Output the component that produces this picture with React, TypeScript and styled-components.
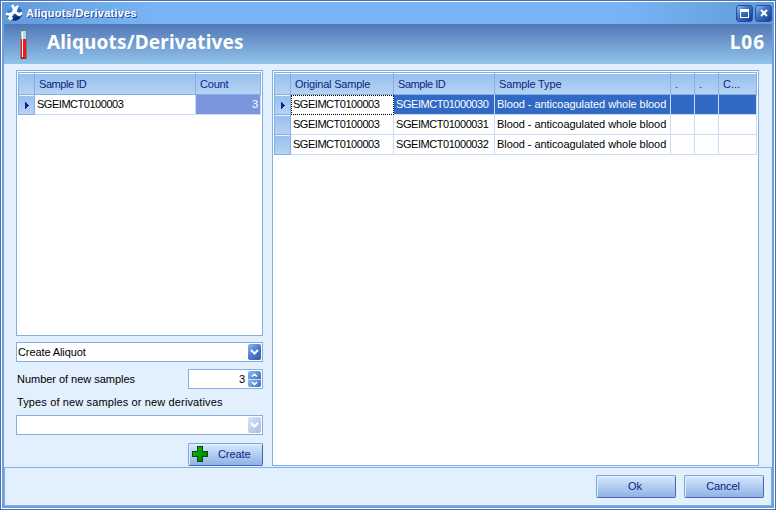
import React from "react";
import styled, { createGlobalStyle } from "styled-components";

const Global = createGlobalStyle`
  * { box-sizing: border-box; }
  body { margin: 0; background: #4a6cb4; }
`;

const LINE = "#84aee6";
const NAVY = "#0c2485";

const Window = styled.div`
  width: 776px;
  height: 510px;
  display: flex;
  flex-direction: column;
  border: 1px solid #4a6cb4;
  outline: 1px solid #fff;
  outline-offset: -2px;
  padding: 1px;
  font: 11px/14px "Liberation Sans", Arial, sans-serif;
  color: #000;
  white-space: nowrap;
  cursor: default;
`;

const TitleBar = styled.div`
  height: 22px;
  flex: none;
  display: flex;
  align-items: center;
  padding: 0 2px 0 3px;
  background: linear-gradient(90deg, #629ad8 0, #78b4f4 150px, #78b4f4 620px, #629ad8 100%);
`;

const Caption = styled.div`
  flex: 1;
  margin-left: 3px;
  font-weight: bold;
  font-size: 11px;
  letter-spacing: 0.26px;
  color: #fff;
  text-shadow: 1px 1px 0 #24479c;
`;

const TitleButton = styled.div`
  width: 17px;
  height: 17px;
  margin-left: 2px;
  border-radius: 3px;
  border: 1px solid #2450a4;
  background: linear-gradient(135deg, #8cbcf0 0%, #3f74c4 40%, #16388c 100%);
  display: grid;
  place-items: center;
`;

const Body = styled.div`
  flex: 1;
  min-height: 0;
  display: flex;
  flex-direction: column;
  border: solid #6a9fdc;
  border-width: 0 2px 2px;
  background: #e2effd;
`;

const Banner = styled.div`
  height: 40px;
  flex: none;
  display: flex;
  align-items: flex-start;
  padding: 5px 8px 0 16px;
  background: linear-gradient(#5076b6, #92c4ea);
  color: #fff;
  font: bold 19px/26px "Noto Sans", sans-serif;
`;

const BannerTitle = styled.div`
  flex: 1;
  margin-left: 20px;
  letter-spacing: 0.15px;
`;

const BannerCode = styled.div`
  letter-spacing: 1px;
  margin-right: -1px;
`;

const Content = styled.div`
  flex: 1;
  min-height: 0;
  display: flex;
  gap: 9px;
  padding: 6px 13px 1px 12px;
`;

const Side = styled.div`
  width: 247px;
  flex: none;
  display: flex;
  flex-direction: column;
`;

const Panel = styled.div`
  flex: 1;
  border: 1px solid ${LINE};
  padding: 1px;
  background: #fff;
`;

const SourcePanel = styled(Panel)`
  flex: none;
  height: 266px;
  margin-bottom: 6px;
`;

const Row = styled.div<{ $cols: string }>`
  display: grid;
  grid-template-columns: ${(p) => p.$cols};
  border-left: 1px solid ${LINE};
`;

const HeadRow = styled(Row)`
  height: 23px;
  border-top: 1px solid ${LINE};
`;

const DataRow = styled(Row)`
  height: 20px;
`;

const HeadCell = styled.div`
  border-right: 1px solid ${LINE};
  border-bottom: 1px solid ${LINE};
  background: linear-gradient(#fff 0 1px, #98c0ec 1px, #b5d3f4 100%);
  color: ${NAVY};
  padding: 4px 0 0 4px;
  overflow: hidden;
`;

const Indicator = styled.div`
  border-right: 1px solid ${LINE};
  border-bottom: 1px solid ${LINE};
  background: linear-gradient(#e8f3ff 0 1px, #98c0ec 1px, #b5d3f4 100%);
  padding: 7px 0 0 6px;
  line-height: 0;
`;

const cellColors = {
  plain: "background:#fff;color:#000;",
  selected: "background:#316ac5;color:#fff;",
  count: "background:#7c96de;color:#fff;text-align:right;",
};

const Cell = styled.div<{ $kind?: keyof typeof cellColors; $focus?: boolean }>`
  ${(p) => cellColors[p.$kind ?? "plain"]}
  border-right: 1px solid #c8dcf8;
  border-bottom: 1px solid #c8dcf8;
  padding: 2px 2px 0;
  ${(p) => p.$focus && "outline: 1px dotted #000; outline-offset: -1px; border-color: #fff;"}
`;

const Text = styled.span<{ $ls?: number }>`
  letter-spacing: ${(p) => p.$ls ?? 0}px;
`;

const Field = styled.div<{ $w?: number }>`
  width: ${(p) => (p.$w ? `${p.$w}px` : "100%")};
  height: 20px;
  flex: none;
  display: flex;
  align-items: center;
  justify-content: space-between;
  padding: 1px 1px 1px 2px;
  border: 1px solid ${LINE};
  background: #fff;
`;

const Value = styled.span<{ $right?: boolean }>`
  flex: 1;
  margin-left: -1px;
  ${(p) => p.$right && "text-align: right; padding-right: 3px;"}
`;

const DropButton = styled.div<{ $off?: boolean }>`
  width: 13px;
  height: 16px;
  border-radius: 2px;
  display: grid;
  place-items: center;
  background: ${(p) =>
    p.$off
      ? "linear-gradient(135deg, #d2e6fa, #a9bde2)"
      : "linear-gradient(135deg, #8cbcf0, #4c7cca 50%, #3458a8)"};
`;

const Spin = styled.div`
  width: 13px;
  height: 16px;
  display: grid;
  grid-template-rows: 8px 8px;
  border-radius: 2px;
  overflow: hidden;
`;

const SpinHalf = styled.div`
  display: grid;
  place-items: center;
  background: linear-gradient(135deg, #8cbcf0, #3f6cbc);
  & + & { border-top: 1px solid #c8dcf8; }
`;

const FieldLine = styled.div`
  display: flex;
  align-items: center;
  justify-content: space-between;
  margin-top: 7px;
  padding-left: 1px;
`;

const Label = styled.div`
  margin: 6px 0 6px 1px;
  height: 14px;
`;

const Button = styled.div<{ $w: number }>`
  width: ${(p) => p.$w}px;
  height: 23px;
  flex: none;
  display: flex;
  align-items: center;
  justify-content: center;
  padding: 0 2px 1px 0;
  border: 1px solid;
  border-color: #7ca4e0 #4866b4 #4866b4 #7ca4e0;
  border-radius: 2px;
  background: linear-gradient(#d8eafc, #b4d0f2 45%, #90b2e4);
  box-shadow: inset 1px 1px 0 #e4f1fe;
  color: ${NAVY};
`;

const CreateButton = styled(Button)`
  align-self: flex-end;
  margin-top: 8px;
  justify-content: flex-start;
  padding-left: 3px;
  gap: 10px;
`;

const Footer = styled.div`
  height: 39px;
  flex: none;
  display: flex;
  justify-content: flex-end;
  gap: 8px;
  padding: 7px 7px 0;
  border: 1px solid ${LINE};
`;

const Logo = () => (
  <svg width="18" height="18" viewBox="0 0 18 18">
    <defs>
      <linearGradient id="logo" x1="0" y1="0" x2="0.4" y2="1">
        <stop offset="0.2" stopColor="#4fa6ec" />
        <stop offset="0.9" stopColor="#0a3390" />
      </linearGradient>
    </defs>
    <circle cx="9.2" cy="8.8" r="8" fill="url(#logo)" />
    <path
      d="M5.8 1.2 8.6.6 9.6 3 12 1.2 14 2 12.4 5 11.6 7.6 14.4 8.8 17 7.6 17.4 10 14.6 12.4 11.6 11 9.6 9.2 7 12.4 8.2 14.8 5.4 16.4 2.6 14.6 4.2 11.8.8 11 1 8.4 4.4 9 7.4 7.4 7.6 4.6Z"
      fill="#fff"
    />
    <path d="M9 13q3 1.4 6-.4q-1.4 3.2-4.8 4z" fill="#062064" />
  </svg>
);

const Tube = () => (
  <svg width="7" height="31" viewBox="0 0 7 31" shapeRendering="crispEdges">
    <path d="M0 1h7v29H0z" fill="#7b7f8a" />
    <path d="M0 0h7v2H0z" fill="#4f8b8c" />
    <path d="M1 2h5v8H1z" fill="#a4dcf6" />
    <path d="M1 10h5v19H1z" fill="#f01c14" />
    <path d="M2 3h1v25H2z" fill="#fff" />
    <path d="M1 29h5v1H1z" fill="#7c3030" />
  </svg>
);

const Marker = () => (
  <svg width="5" height="7" viewBox="0 0 5 7" shapeRendering="crispEdges">
    <path d="M0 0h1v1h1v1h1v1h1v1H3v1H2v1H1v1H0z" fill={NAVY} />
  </svg>
);

const Chevron = ({ w = 9, up = false }: { w?: number; up?: boolean }) => (
  <svg width={w} height={(w + 3) / 2} viewBox={`0 0 ${w} ${(w + 3) / 2}`}>
    <path
      d={up ? `M1 ${w / 2}L${w / 2} 1.4L${w - 1} ${w / 2}` : `M1 1L${w / 2} ${w / 2}L${w - 1} 1`}
      fill="none"
      stroke="#fff"
      strokeWidth={w > 7 ? 2 : 1.6}
    />
  </svg>
);

const Plus = () => (
  <svg width="16" height="16" viewBox="0 0 16 16" shapeRendering="crispEdges">
    <defs>
      <linearGradient id="plus" x1="0" y1="0" x2="1" y2="1">
        <stop offset="0.2" stopColor="#00b400" />
        <stop offset="1" stopColor="#007600" />
      </linearGradient>
    </defs>
    <path d="M5 0h6v5h5v6h-5v5H5v-5H0V5h5z" fill="#144414" />
    <path d="M6 1h4v5h5v4h-5v5H6v-5H1V6h5z" fill="url(#plus)" />
  </svg>
);

const LEFT = "16px 161px 65px";
const RIGHT = "16px 103px 101px 176px 24px 24px 38px";
const RIGHT_HEADS: [string, number][] = [
  ["Original Sample", -0.2],
  ["Sample ID", -0.45],
  ["Sample Type", -0.15],
  [".", 0],
  [".", 0],
  ["C...", 0],
];
const SAMPLES = ["SGEIMCT01000030", "SGEIMCT01000031", "SGEIMCT01000032"];

export default function App() {
  return (
    <>
      <Global />
      <Window>
        <TitleBar>
          <Logo />
          <Caption>Aliquots/Derivatives</Caption>
          <TitleButton>
            <svg width="9" height="9" viewBox="0 0 9 9" shapeRendering="crispEdges">
              <path d="M0 0h9v9H0zM1 3v5h7V3z" fill="#fff" fillRule="evenodd" />
            </svg>
          </TitleButton>
          <TitleButton>
            <svg width="8" height="8" viewBox="0 0 8 8">
              <path d="M1 1l6 6M7 1l-6 6" stroke="#fff" strokeWidth="2" />
            </svg>
          </TitleButton>
        </TitleBar>
        <Body>
          <Banner>
            <Tube />
            <BannerTitle>Aliquots/Derivatives</BannerTitle>
            <BannerCode>L06</BannerCode>
          </Banner>
          <Content>
            <Side>
              <SourcePanel>
                <HeadRow $cols={LEFT}>
                  <HeadCell />
                  <HeadCell><Text $ls={-0.45}>Sample ID</Text></HeadCell>
                  <HeadCell><Text $ls={-0.2}>Count</Text></HeadCell>
                </HeadRow>
                <DataRow $cols={LEFT}>
                  <Indicator><Marker /></Indicator>
                  <Cell><Text $ls={-0.47}>SGEIMCT0100003</Text></Cell>
                  <Cell $kind="count">3</Cell>
                </DataRow>
              </SourcePanel>
              <Field>
                <Value><Text $ls={-0.1}>Create Aliquot</Text></Value>
                <DropButton><Chevron /></DropButton>
              </Field>
              <FieldLine>
                <Text $ls={-0.03}>Number of new samples</Text>
                <Field $w={75}>
                  <Value $right>3</Value>
                  <Spin>
                    <SpinHalf><Chevron w={7} up /></SpinHalf>
                    <SpinHalf><Chevron w={7} /></SpinHalf>
                  </Spin>
                </Field>
              </FieldLine>
              <Label><Text $ls={0.13}>Types of new samples or new derivatives</Text></Label>
              <Field>
                <Value />
                <DropButton $off><Chevron /></DropButton>
              </Field>
              <CreateButton $w={75}><Plus /><Text $ls={-0.1}>Create</Text></CreateButton>
            </Side>
            <Panel>
              <HeadRow $cols={RIGHT}>
                <HeadCell />
                {RIGHT_HEADS.map(([t, ls], i) => (
                  <HeadCell key={i}><Text $ls={ls}>{t}</Text></HeadCell>
                ))}
              </HeadRow>
              {SAMPLES.map((id, i) => {
                const kind = i === 0 ? "selected" : "plain";
                return (
                  <DataRow $cols={RIGHT} key={id}>
                    <Indicator>{i === 0 && <Marker />}</Indicator>
                    <Cell $focus={i === 0}><Text $ls={-0.47}>SGEIMCT0100003</Text></Cell>
                    <Cell $kind={kind}><Text $ls={-0.45}>{id}</Text></Cell>
                    <Cell $kind={kind}><Text $ls={-0.06}>Blood - anticoagulated whole blood</Text></Cell>
                    <Cell $kind={kind} />
                    <Cell $kind={kind} />
                    <Cell $kind={kind} />
                  </DataRow>
                );
              })}
            </Panel>
          </Content>
          <Footer>
            <Button $w={80}>Ok</Button>
            <Button $w={80}><Text $ls={-0.1}>Cancel</Text></Button>
          </Footer>
        </Body>
      </Window>
    </>
  );
}
